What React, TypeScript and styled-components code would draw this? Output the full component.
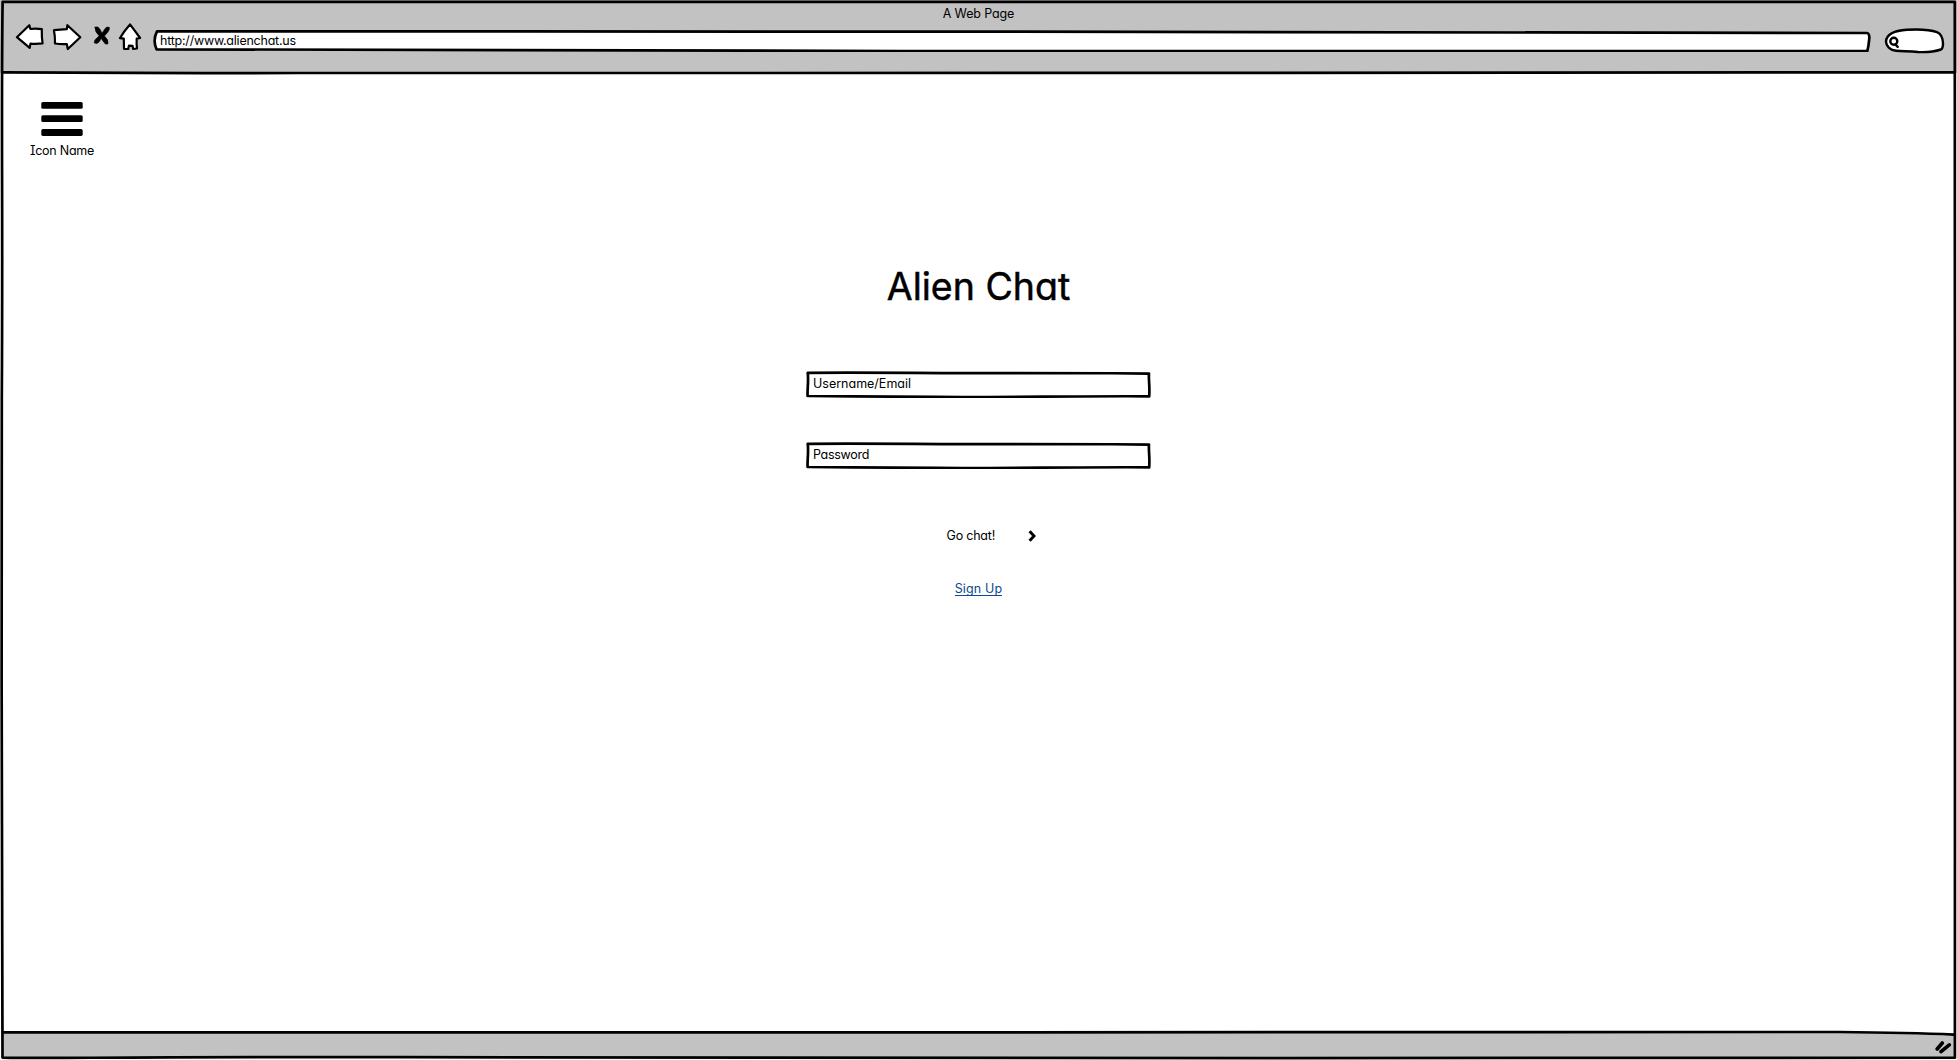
import React from "react";
import styled, { createGlobalStyle } from "styled-components";

const GlobalStyle = createGlobalStyle`
  * { box-sizing: border-box; }
  body {
    margin: 0;
    background: #fff;
    color: #000;
    font-family: Inter, "Liberation Sans", sans-serif;
    font-feature-settings: "cv11", "cv08";
    font-size: 12.5px;
    line-height: 16px;
  }
`;

const Window = styled.div`
  position: relative;
  display: flex;
  flex-direction: column;
  width: 1957px;
  height: 1060px;
  overflow: hidden;
`;

/* Hand-drawn outline laid over the box it belongs to */
const Outline = styled.svg`
  position: absolute;
  inset: 0;
  width: 100%;
  height: 100%;
  fill: none;
  stroke: #000;
  stroke-width: 2.7;
  stroke-linejoin: round;
  stroke-linecap: round;
  pointer-events: none;
`;

const Text = styled.span<{ $spacing?: number }>`
  position: relative;
  white-space: nowrap;
  letter-spacing: ${(p) => p.$spacing ?? 0}px;
`;

const Header = styled.header`
  display: flex;
  flex-direction: column;
  height: 73px;
  background: #c2c2c2;
`;

const TitleBar = styled.div`
  display: flex;
  justify-content: center;
  padding-top: 6px;
  height: 22px;
`;

const Toolbar = styled.nav`
  display: flex;
  align-items: flex-start;
  padding-left: 15px;
`;

const NavIcons = styled.svg`
  width: 128px;
  height: 30px;
  margin-right: 10px;
  fill: #fff;
  stroke: #000;
  stroke-width: 2.2;
  stroke-linejoin: round;
  stroke-linecap: round;
`;

const AddressBar = styled.div`
  position: relative;
  display: flex;
  width: 1718px;
  height: 26px;
  margin-top: 4px;
  padding: 7px 0 0 7px;
`;

const SearchBox = styled.svg`
  width: 62px;
  height: 28px;
  margin: 5px 0 0 11.5px;
  fill: #fff;
  stroke: #000;
  stroke-width: 2.4;
  stroke-linecap: round;
`;

const Page = styled.main`
  display: flex;
  flex-direction: column;
  flex: 1;
  padding-top: 29px;
`;

const MenuButton = styled.div`
  display: flex;
  flex-direction: column;
  align-items: center;
  width: 64px;
  margin-left: 30px;
  height: 64px;
`;

const Bars = styled.svg`
  width: 42px;
  height: 34px;
  margin-bottom: 7px;
`;

const Login = styled.form`
  display: flex;
  flex-direction: column;
  align-items: center;
  padding-top: 96px;
`;

const Heading = styled.h1`
  margin: 0 0 59px;
  font-size: 37.5px;
  line-height: 50px;
  font-weight: 400;
  -webkit-text-stroke: 0.5px #000;
  white-space: nowrap;
`;

const Field = styled.label`
  position: relative;
  display: flex;
  width: 345px;
  height: 27px;
  margin-bottom: 44px;
  padding: 5px 0 0 7px;
`;

const Submit = styled.div`
  display: flex;
  align-items: center;
  justify-content: space-between;
  width: 89px;
  height: 16px;
  margin: 15px 0 37px 25px;
`;

const Chevron = styled.svg`
  width: 8px;
  height: 12px;
  fill: none;
  stroke: #000;
  stroke-width: 2.9;
`;

const SignUp = styled.a`
  color: #0d4a8f;
  border-bottom: 1px solid #0d4a8f;
  line-height: 15px;
  height: 15px;
  letter-spacing: 0.15px;
  white-space: nowrap;
`;

const Footer = styled.footer`
  position: relative;
  display: flex;
  justify-content: flex-end;
  height: 28px;
  padding: 8px 5px 0 0;
`;

const Grip = styled.svg`
  position: relative;
  width: 18px;
  height: 14px;
  stroke: #000;
  stroke-width: 3.6;
  stroke-linecap: round;
`;

function TextField({ label, spacing }: { label: string; spacing: number }) {
  return (
    <Field>
      <Outline viewBox="0 0 345 27">
        <path d="M1.7 1.8 C60 1.2 120 2.2 180 2.1 S290 2 343 2.6 C342.4 9 344 15 343.2 25.3 C270 24.9 200 26.4 130 25.9 S50 25.6 1.6 25 C1.2 18 2.8 10 1.7 1.8Z" />
      </Outline>
      <Text $spacing={spacing}>{label}</Text>
    </Field>
  );
}

export default function App() {
  return (
    <>
      <GlobalStyle />
      <Window>
        <Header>
          <TitleBar>
            <Text $spacing={-0.13}>A Web Page</Text>
          </TitleBar>
          <Toolbar>
            <NavIcons viewBox="15 22 128 30">
              <path d="M16.9 37.2 L29.3 25.2 L30.4 29 Q36 28 41.8 29.2 Q41.6 37 42.6 43.4 Q36 44.2 30.5 43.6 L29.7 47.8Z" />
              <path d="M53.9 30.2 Q60 29.8 66.8 29.2 L67.4 25.2 L80.3 37.3 L67.8 49 L66.8 44 Q61 44.4 55 43.5 Q55.2 36 53.9 30.2Z" />
              <path
                fill="#000"
                strokeWidth="0.6"
                d="M95 27.2 Q98 26 99.8 29 L102 33.2 L105.2 28.4 Q107 26.4 109.4 27.4 Q109.8 30 107.6 32.4 L104.4 36 Q108.8 39.8 108 43.8 Q105.4 45 103.8 42.2 L101.4 38.6 L98.6 42.4 Q96.6 44.4 94.2 42.8 Q94 40 96.8 38 L99.2 35.8 Q94.6 31.6 95 27.2Z"
              />
              <path d="M130 24.4 Q135 31 140.1 38 L136.7 38.7 Q136.4 44 137 48.5 L133.2 49 L132.5 45.8 L129 45.6 L128.2 49 L124 48.8 L123.8 38.7 L119.9 38.2 Q124 31 130 24.4Z" />
            </NavIcons>
            <AddressBar>
              <Outline viewBox="0 0 1718 26">
                <path
                  fill="#fff"
                  d="M4 5.3 C200 5 500 5.3 800 5.6 S1400 7 1714 7 Q1717.2 7.5 1716 15 Q1715.6 20 1714.3 25.2 C1300 25.4 1000 25.4 750 25 S250 23 3.5 23.3 Q-0.5 14 4 5.3Z"
                />
              </Outline>
              <Text $spacing={-0.23}>http://www.alienchat.us</Text>
            </AddressBar>
            <SearchBox viewBox="1883 27 62 28">
              <path d="M1886 41.5 C1886.5 33 1897 30.5 1907 29.8 C1917 29.2 1930 29.6 1937 32.2 C1941.5 34 1942.8 39 1943 43.5 C1943 46 1943 48.5 1941 49.5 C1935 51.5 1926 52.4 1918 52 C1908 51 1902 51.6 1896 50.8 C1890 50 1886 46 1886 41.5Z" />
              <circle cx="1893.8" cy="41.2" r="3.5" />
              <path d="M1895.4 44.5 L1897.7 46.8" />
            </SearchBox>
          </Toolbar>
        </Header>

        <Page>
          <MenuButton>
            <Bars viewBox="0 0 42 34">
              <rect x="0.3" y="0" width="41.4" height="6.8" rx="1.6" />
              <rect x="0.3" y="13.2" width="41.4" height="6.8" rx="1.6" />
              <rect x="0.3" y="27.1" width="41.4" height="6.8" rx="1.6" />
            </Bars>
            <Text $spacing={-0.25}>Icon Name</Text>
          </MenuButton>

          <Login>
            <Heading>Alien Chat</Heading>
            <TextField label="Username/Email" spacing={0} />
            <TextField label="Password" spacing={-0.3} />
            <Submit>
              <Text $spacing={-0.2}>Go chat!</Text>
              <Chevron viewBox="0 0 8 12">
                <path d="M1.6 1.3 L6 6 L1.6 10.7" />
              </Chevron>
            </Submit>
            <SignUp>Sign Up</SignUp>
          </Login>
        </Page>

        <Footer>
          <Outline viewBox="0 1032 1957 28">
            <path
              fill="#c2c2c2"
              stroke="none"
              d="M2 1032.5 C300 1032.6 1500 1031.8 1840 1032 Q1910 1032.6 1955 1034.6 V1058 H2Z"
            />
          </Outline>
          <Grip viewBox="1934 1040 18 14">
            <path d="M1937.2 1049 L1942.3 1043 M1941 1051.7 L1949.3 1044.8" />
          </Grip>
        </Footer>

        <Outline viewBox="0 0 1957 1060">
          <path d="M2.6 1.9 H1954.8 C1956 200 1954.5 700 1954.9 1057.7 C1500 1058.4 700 1058 400 1057.2 S60 1059 2.5 1057.6 C2.8 900 0.6 600 1.8 400 S1 120 2.6 1.9Z" />
          <path d="M2.5 72.3 C120 73 200 73.2 300 73 S1500 73.4 1954 72.3" />
          <path d="M2.5 1032.3 C300 1033 1500 1031.8 1840 1032 Q1910 1032.6 1954 1034.6" />
        </Outline>
      </Window>
    </>
  );
}
